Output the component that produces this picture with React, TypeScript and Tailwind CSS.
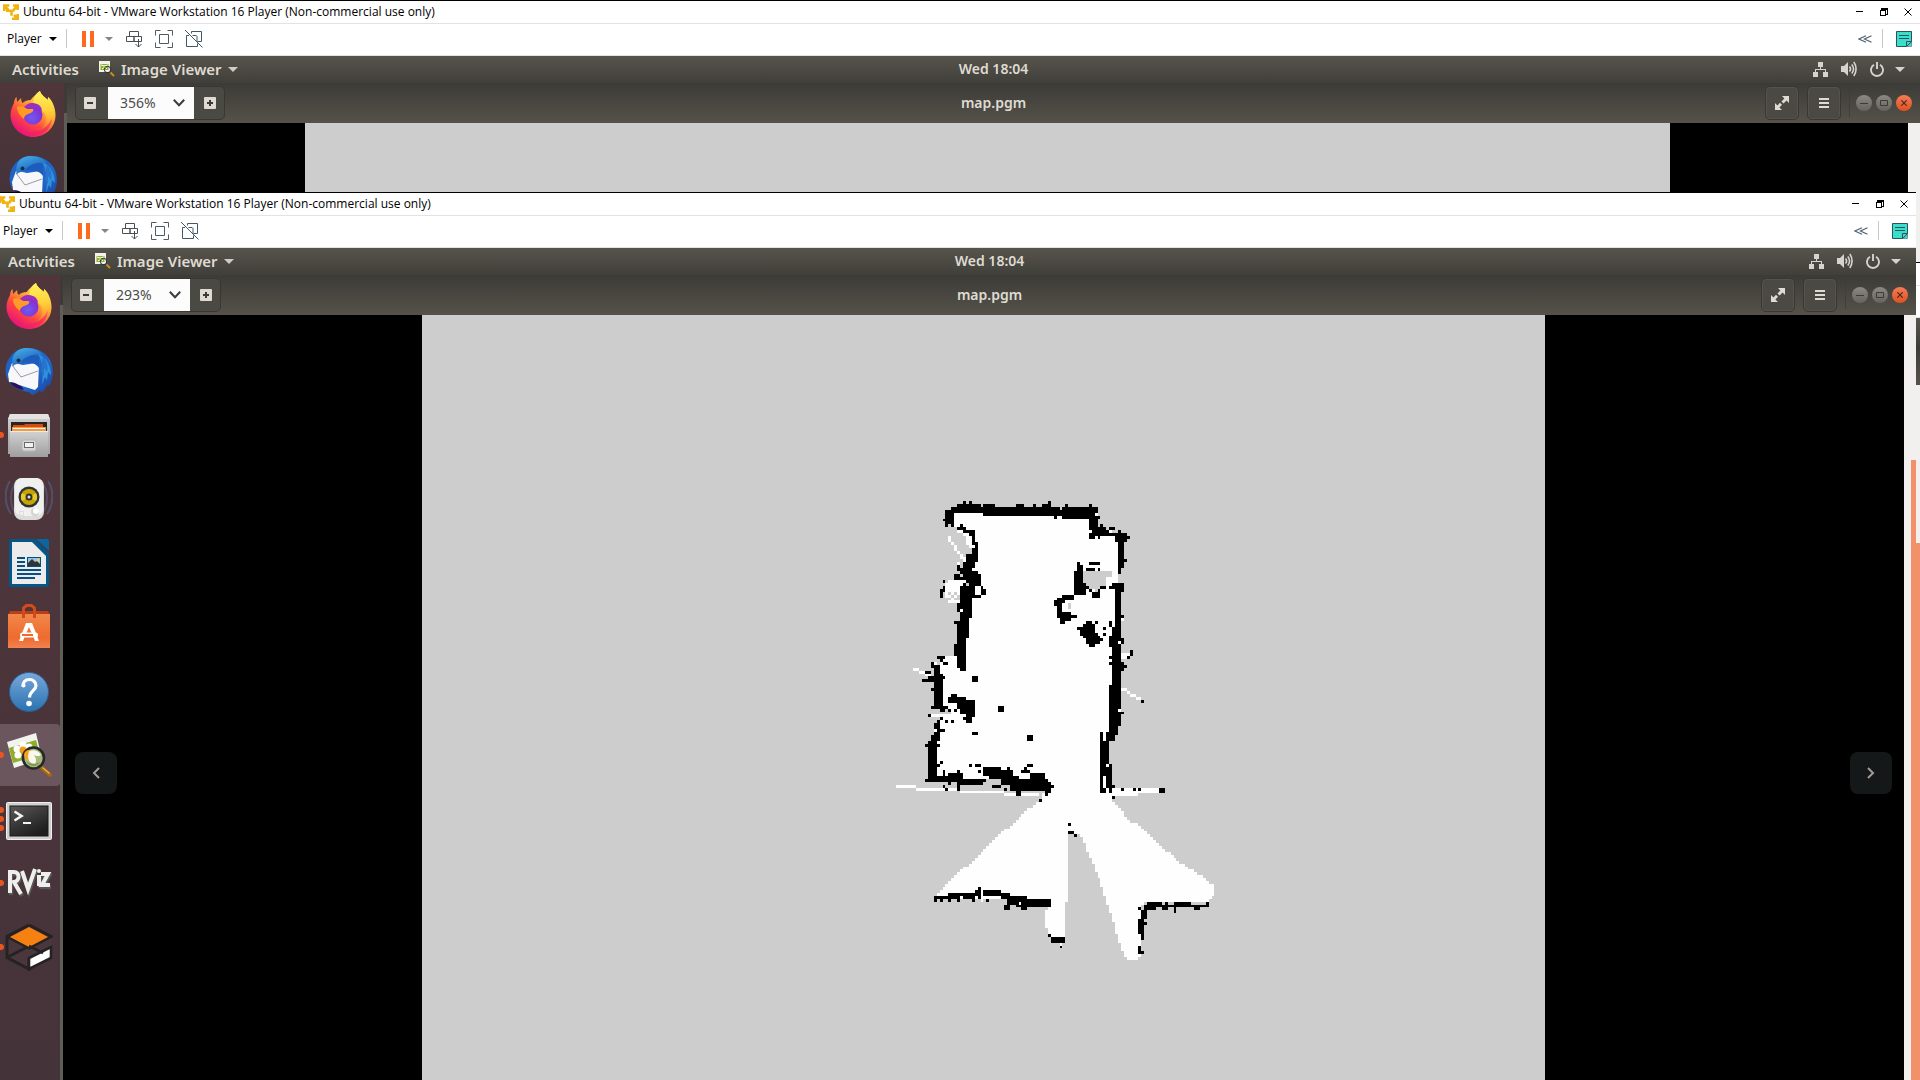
import React from "react";

/* ---------- occupancy map ---------- */

type Layer = { kind: "free" | "wall" | "unknown"; poly?: string; rects?: string };

const CELL = 8.773;
const X0 = -1374;
const Y0 = 1.6;
const COLS = 384;
const ROWS = 262;
const Y_START = -57;

const layers: Layer[] = [
  {
    kind: "free",
    poly: "222,92 640,92 640,165 715,165 722,270 710,310 710,480 700,620 695,740 688,760 688,930 697,960 750,1025 768,1029 850,1105 905,1150 985,1203 1005,1222 1005,1238 987,1262 800,1262 785,1280 785,1425 767,1440 742,1440 725,1410 690,1290 665,1215 640,1155 608,1080 600,1063 565,1063 565,1262 557,1262 557,1375 510,1375 497,1335 497,1300 510,1262 166,1249 166,1243 250,1165 290,1133 350,1073 450,985 485,950 500,930 345,897 180,895 165,890 165,740 190,712 205,705 200,680 175,680 175,545 200,530 230,530 250,400 270,330 275,210 249,170 231,158 231,145 222,141",
  },
  { kind: "unknown", poly: "231,158 249,158 258,185 267,205 258,222 240,213 222,180" },
  {
    kind: "unknown",
    poly: "609,272 688,272 697,285 683,310 665,318 653,333 627,328 618,307 609,305",
  },
  {
    kind: "free",
    poly: "205,300 240,294 258,300 258,325 240,342 235,375 213,370 196,350 198,316",
  },
  {
    kind: "unknown",
    rects:
      "222 333 231 342;213 342 222 350;231 342 240 360;205 350 213 360;205 333 213 342;222 350 231 360;162 692 213 701;320 897 354 912;564 369 573 387",
  },
  {
    kind: "free",
    rects:
      "207 167 213 185;213 185 222 194;222 194 231 210;231 210 240 220;240 220 249 237;249 230 258 245;231 245 240 254;683 290 697 316;697 280 705 290;705 272 713 280;98 562 117 570;117 570 135 579;135 579 153 588;153 701 240 710;722 624 740 633;740 633 749 642;749 642 767 651;767 651 785 660;722 518 749 536;48 912 108 921;108 921 240 930;240 930 372 939;372 939 480 947;697 921 837 939;697 939 777 947;540 1386 549 1395;162 545 171 554",
  },
  {
    kind: "wall",
    rects:
      "231 72 302 96;213 81 231 96;198 90 222 132;198 132 207 140;213 132 222 140;190 114 198 123;249 63 258 72;267 63 276 72;312 72 345 81;302 81 312 96;312 81 522 104;408 72 435 81;460 72 468 81;487 72 513 81;504 63 513 72;522 81 540 104;522 104 531 113;540 90 549 104;549 81 653 113;558 72 566 81;627 72 636 81",
  },
  {
    kind: "wall",
    rects:
      "627 104 653 150;653 104 662 113;636 141 680 167;627 158 645 176;653 167 662 176;662 132 672 141;688 141 705 150;680 150 697 158;680 158 715 167;715 150 722 158;705 158 740 185;740 167 749 176;715 185 731 264;731 237 740 245;713 264 722 280;627 245 662 254;591 245 600 272;600 254 609 272;618 263 645 272;653 263 662 272;582 272 609 342;582 333 618 342;609 307 618 325;609 316 618 333;618 316 627 325;627 325 636 333;636 333 662 342;653 325 662 333;636 342 662 350;662 316 680 325;697 307 705 316;705 310 731 333;688 316 705 325",
  },
  {
    kind: "wall",
    rects:
      "705 333 722 480;722 405 731 422;697 440 722 480;688 422 697 440;688 465 722 500;722 475 731 492;697 500 722 614;688 527 697 536;688 545 697 554;722 545 731 570;731 554 740 562;714 597 722 606;688 614 722 738;722 692 731 701;749 510 758 527;740 527 749 536;785 660 794 669;688 738 714 765;663 757 672 937;672 783 688 890;680 757 705 783;680 880 688 920;688 852 697 937;672 920 680 937;697 912 705 920;723 921 731 929;758 921 767 929;777 921 785 929;837 921 855 938;697 947 705 956",
  },
  {
    kind: "wall",
    rects:
      "549 342 582 360;531 350 558 369;522 360 549 378;531 378 549 412;549 396 574 413;540 405 574 422;540 422 558 430;574 404 591 413;591 440 600 448;609 431 645 448;600 440 645 465;609 457 653 475;618 475 662 492;627 492 645 500;618 422 636 431;645 422 653 431;653 465 662 475;662 475 672 483;672 440 680 448;672 457 680 465",
  },
  {
    kind: "wall",
    rects:
      "240 132 249 141;231 141 258 150;249 150 276 158;267 150 285 167;276 158 285 185;285 185 294 245;276 185 285 194;276 205 294 220;258 220 294 245;249 245 285 263;231 254 240 272;240 263 276 280;249 272 294 290;222 282 240 298;240 290 267 298;258 290 302 307;294 282 302 310;267 298 285 350;240 316 275 350;285 307 302 320;302 316 312 325;302 325 320 342;275 342 302 350;249 307 258 316;240 342 275 390;231 370 275 396;240 387 275 413;231 430 267 475;240 413 267 430;222 422 240 431;231 475 258 492;222 492 258 530;231 530 258 560;240 560 258 570;190 300 198 307;180 325 190 350;190 316 198 333",
  },
  {
    kind: "wall",
    rects:
      "171 527 198 536;180 536 189 545;189 545 207 554;153 545 162 562;162 554 180 600;135 570 153 579;144 588 165 606;126 597 144 606;162 580 189 683;189 588 198 597;153 624 162 633;153 675 162 683;162 675 207 683;180 683 198 690;207 683 213 692;213 642 231 651;205 651 258 660;205 660 285 668;231 668 285 683;240 675 285 701;258 701 285 710;249 710 276 720;258 720 276 729;222 683 231 692;144 701 153 710;180 710 189 718;171 718 180 727;162 727 180 747;171 747 198 756;198 720 207 729;213 720 222 729;276 588 294 606;354 675 372 692",
  },
  {
    kind: "wall",
    rects:
      "162 756 180 765;153 765 180 783;144 783 171 900;135 790 144 797;171 790 180 797;135 897 171 905;180 843 189 852;171 852 180 861;189 870 198 888;171 888 205 905;205 879 231 905;213 879 222 888;231 870 240 879;231 879 249 905;231 905 240 929;240 897 312 918;312 897 320 905;205 905 213 914;189 912 198 920;198 920 207 929;276 756 294 765;444 765 459 783;267 852 276 861;285 852 302 861;294 870 302 879;312 861 363 888;330 888 398 897;345 870 398 888;363 867 390 879;381 861 390 870;354 888 398 900;363 897 500 910;390 905 513 929;336 912 363 920;372 920 381 929;408 920 426 947;495 912 522 921;495 921 513 938;495 929 504 947;426 870 444 880;435 861 444 870;444 852 459 861;444 870 453 879;450 879 495 915;398 888 417 897;477 956 486 965",
  },
  {
    kind: "wall",
    rects:
      "565 1029 573 1035;565 1053 582 1062;582 1062 591 1070;162 1248 240 1257;162 1257 171 1262;207 1239 276 1250;249 1239 285 1257;285 1230 302 1248;294 1221 302 1257;276 1248 285 1262;180 1257 189 1262;205 1257 213 1262;231 1257 240 1262;312 1230 363 1248;336 1239 390 1248;363 1248 443 1257;381 1257 513 1270;443 1257 513 1281;372 1272 390 1290;408 1272 443 1280;426 1280 443 1290;320 1257 328 1262;513 1371 558 1385;504 1362 513 1371;540 1395 549 1404",
  },
  {
    kind: "wall",
    rects:
      "802 1263 846 1281;855 1263 864 1272;846 1270 872 1281;846 1281 864 1290;881 1263 933 1281;872 1272 881 1281;881 1281 890 1298;933 1272 987 1281;978 1263 987 1272;942 1281 960 1290;802 1281 828 1290;777 1281 786 1290;794 1272 802 1290;786 1290 802 1317;777 1317 795 1380;794 1325 802 1335;777 1395 786 1422;786 1413 795 1422",
  },
  {
    kind: "free",
    rects:
      "645 96 653 104;240 387 249 396;722 413 731 422;714 483 722 492;714 683 722 692;672 888 680 920;680 850 688 858;302 1221 312 1262;417 1262 426 1272;189 660 198 668;435 879 444 888;777 1365 786 1380;240 1248 249 1257;689 150 697 155",
  },
];

function inside(x: number, y: number, pts: number[][]) {
  let hit = false;
  for (let i = 0, j = pts.length - 1; i < pts.length; j = i++) {
    const [xi, yi] = pts[i];
    const [xj, yj] = pts[j];
    if (yi > y !== yj > y && x < ((xj - xi) * (y - yi)) / (yj - yi) + xi) hit = !hit;
  }
  return hit;
}

function buildMap() {
  const grid: string[][] = Array.from({ length: ROWS }, () => Array(COLS).fill("unknown"));
  for (const layer of layers) {
    if (layer.poly) {
      const pts = layer.poly.split(" ").map((p) => p.split(",").map(Number));
      for (let r = 0; r < ROWS; r++)
        for (let c = 0; c < COLS; c++)
          if (inside(X0 + (c + 0.5) * CELL, Y0 + (r + Y_START + 0.5) * CELL, pts)) grid[r][c] = layer.kind;
    }
    for (const s of layer.rects ? layer.rects.split(";") : []) {
      const [a, b, c2, d] = s.split(" ").map(Number);
      const ca = Math.round((a - X0) / CELL);
      const ra = Math.round((b - Y0) / CELL) - Y_START;
      const cb = Math.max(ca + 1, Math.round((c2 - X0) / CELL));
      const rb = Math.max(ra + 1, Math.round((d - Y0) / CELL) - Y_START);
      for (let r = ra; r < rb; r++) for (let c = ca; c < cb; c++) grid[r][c] = layer.kind;
    }
  }
  const out = { free: "", wall: "" };
  grid.forEach((row, r) => {
    let c = 0;
    while (c < COLS) {
      let e = c;
      while (e < COLS && row[e] === row[c]) e++;
      const kind = row[c];
      if (kind === "free" || kind === "wall") {
        const xa = Math.round((X0 + c * CELL) / 3);
        const xb = Math.round((X0 + e * CELL) / 3);
        const ya = Math.round((Y0 + (r + Y_START) * CELL) / 3);
        const yb = Math.round((Y0 + (r + Y_START + 1) * CELL) / 3);
        out[kind] += `M${xa} ${ya}H${xb}V${yb}H${xa}Z`;
      }
      c = e;
    }
  });
  return out;
}

const map = buildMap();

const MapDrawing = () => (
  <svg viewBox="0 0 1123 765" className="block w-full" shapeRendering="crispEdges" role="img" aria-label="map.pgm">
    <g transform="translate(458 165)">
      <path d={map.free} fill="#fefefe" />
      <path d={map.wall} fill="#000" />
    </g>
  </svg>
);

/* ---------- launcher icons ---------- */

const Svg = ({ children }: { children: React.ReactNode }) => (
  <svg viewBox="0 0 48 48" className="size-12 shrink-0" aria-hidden="true">
    {children}
  </svg>
);

const Firefox = () => (
  <Svg>
    <defs>
      <linearGradient id="ffa" x1="0.85" y1="0.1" x2="0.25" y2="0.95">
        <stop offset="0" stopColor="#fff44f" />
        <stop offset="0.35" stopColor="#ffa930" />
        <stop offset="0.65" stopColor="#ff4a3f" />
        <stop offset="1" stopColor="#e8107c" />
      </linearGradient>
      <radialGradient id="ffb" cx="0.45" cy="0.65" r="0.6">
        <stop offset="0" stopColor="#6a5cf0" />
        <stop offset="1" stopColor="#8a2ad0" />
      </radialGradient>
      <linearGradient id="ffc" x1="0.5" y1="0" x2="0.6" y2="1">
        <stop offset="0" stopColor="#fff25a" />
        <stop offset="0.5" stopColor="#ffd23c" />
        <stop offset="1" stopColor="#ff9a2e" stopOpacity="0.2" />
      </linearGradient>
    </defs>
    <g transform="translate(0 -1)">
      <path d="M31 1c1 4 5 6 8 9c-.3-2 0-3 .5-3c4 4 7 11 7 18C46.500 38 36 47 24 47S1.500 37 1.500 25c0-5 2-9 3.500-12c0-2 1-5 2.500-6l.6 5l4-4c0 2 .4 4 1.500 5c2-2 5-3 8-3C24 7 28 3 31 1Z" fill="url(#ffa)" />
      <path d="M31 1c1 4 5 6 8 9c5 6 7 14 4 22c-3 6-8 9-13 9c5-3 8-8 7-14c-1-7-8-8-12-12C23 10 26 4 31 1Z" fill="url(#ffc)" />
      <circle cx="24" cy="25" r="9.500" fill="url(#ffb)" />
      <path d="M14 19c3-6 9-7 14-5c3 1 5 4 5 7c-3-3-6-4-9-3Z" fill="#9a2fc4" />
      <path d="M8 17c4-2 8 0 10 2h6c1 2-1 4-5 5c-3 1-4 3-4 5c-3-2-7-7-7-12Z" fill="#ff9b24" />
      <path d="M3 29c4 11 14 15 25 12c8-2 13-7 15-13c-1 11-9 18-19 18S5 39 3 29Z" fill="#ef1e6c" opacity="0.65" />
    </g>
  </Svg>
);

const Thunderbird = () => (
  <Svg>
    <defs>
      <linearGradient id="tba" x1="0" y1="0" x2="1" y2="1">
        <stop offset="0" stopColor="#1d5fc0" />
        <stop offset="0.6" stopColor="#2268c9" />
        <stop offset="1" stopColor="#1b3f9c" />
      </linearGradient>
      <linearGradient id="tbb" x1="0" y1="0" x2="0.6" y2="1">
        <stop offset="0" stopColor="#49b4ea" />
        <stop offset="1" stopColor="#1756b5" />
      </linearGradient>
    </defs>
    <path d="M15 2C27-1 39 3 45 13c4 8 4 18-1 26l-2-1c-1 3-3 6-6 8l-1-3c-3 3-5 4-8 5l-3-3C14 44 3 38 1 28C-1 17 5 6 15 2Z" fill="url(#tba)" />
    <path d="M3 31c2 7 8 11 16 12l-4-6Z" fill="#2a1060" />
    <path d="M4 33l2-13l3-4l9 2l13-2l3 2l-1 22l-3 3L14 38Z" fill="#f8f8fb" />
    <path d="M3 27l4-11l7 2v18L4 35Z" fill="#f8f8fb" />
    <path d="M7 18l9 12l17-6" fill="none" stroke="#9b9ba5" strokeWidth="1" />
    <path d="M8 20C5 8 12 1 22 1c8 0 13 3 16 7C28 6 20 10 16 15c-3 3-7 1-8 5Z" fill="url(#tbb)" />
    <path d="M16 15c5-6 13-8 18-6v12c-4-6-11-6-18-6Z" fill="#1c5cbc" />
    <path d="M33 7c10 4 13 14 13 21l-3-3l-1 8l-2-3l-3 8c1-9 2-22-4-31Z" fill="#2b92db" />
    <path d="M38 10c5 5 5 11 4 15l-3-4v8l-3-4c2-6 0-11 2-15Z" fill="#2a73cc" />
    <circle cx="13.500" cy="13.500" r="2" fill="#12304e" />
  </Svg>
);

const Files = () => (
  <Svg>
    <defs>
      <linearGradient id="fla" x1="0" y1="0" x2="0" y2="1">
        <stop offset="0" stopColor="#d2d2d2" />
        <stop offset="1" stopColor="#9e9e9e" />
      </linearGradient>
    </defs>
    <path d="M5 3h38l2 5v35h-2v3H5v-3H3V8Z" fill="url(#fla)" />
    <path d="M5 3h38l2 5H3Z" fill="#e2e2e2" />
    <path d="M6 11h36v11H6Z" fill="#2b2420" />
    <path d="M8 14h11l1-1h18v3H8Z" fill="#cf4d17" />
    <path d="M7 16h34v5H7Z" fill="#f59a3e" />
    <path d="M8 17h32v1H8Z" fill="#fff4e0" />
    <path d="M5 20h38v26H5Z" fill="url(#fla)" />
    <path d="M5 20h38v1H5Z" fill="#ececec" />
    <rect x="17" y="29" width="14" height="11" rx="2" fill="#d8d8d8" stroke="#b4b4b4" />
    <rect x="19.500" y="31.500" width="9" height="5" fill="#f2f2f2" stroke="#6a6a6a" />
  </Svg>
);

const Rhythmbox = () => (
  <Svg>
    <g fill="none" stroke="#5d7bb2" strokeWidth="2" opacity="0.4">
      <path d="M5 6C-1 15-1 29 6 39M9 10c-4 8-4 18 0 26M43 6c6 9 6 23-1 33M39 10c4 8 4 18 0 26" />
    </g>
    <rect x="9" y="3" width="30" height="42" rx="8" fill="#dcdcda" />
    <rect x="10" y="3" width="28" height="38" rx="7" fill="#f0f0ee" />
    <circle cx="24" cy="22" r="10.500" fill="#2e3436" />
    <circle cx="24" cy="22" r="8" fill="#c8a400" />
    <path d="M24 22l-7-4a8 8 0 0 0 0 8ZM24 22l7-4a8 8 0 0 1 0 8Z" fill="#e7ca28" />
    <circle cx="24" cy="22" r="3.500" fill="#333" />
    <circle cx="24" cy="22" r="1.500" fill="#ddd" />
    <circle cx="30" cy="37" r="4" fill="#d2d2d0" />
    <circle cx="31" cy="36" r="3" fill="#fff" />
    <rect x="14.500" y="36.500" width="4" height="4" fill="none" stroke="#ddd" />
  </Svg>
);

const Writer = () => (
  <Svg>
    <path d="M7 0h23l14 14v31a3 3 0 0 1-3 3H7a3 3 0 0 1-3-3V3a3 3 0 0 1 3-3Z" fill="#065688" />
    <path d="M31 0h11a2 2 0 0 1 2 2v10Z" fill="#0a66a0" />
    <path d="M7 3h20l14 14v28H7Z" fill="#ececec" />
    <path d="M12 18h8v2h-8ZM12 22h8v2h-8ZM12 26h8v2h-8ZM12 30h24v2H12ZM12 34h24v2H12ZM12 38h18v2H12Z" fill="#08507f" />
    <rect x="22.500" y="18.500" width="13" height="9" fill="#8fc6ea" stroke="#08507f" />
    <path d="M23 27v-3l4-4l3 3l2-1l3 3v2Z" fill="#333" />
    <circle cx="33" cy="21" r="1.500" fill="#f5d33c" />
  </Svg>
);

const Software = () => (
  <Svg>
    <defs>
      <linearGradient id="swa" x1="0" y1="0" x2="0" y2="1">
        <stop offset="0" stopColor="#f0884a" />
        <stop offset="0.7" stopColor="#ef6a2e" />
        <stop offset="1" stopColor="#f28350" />
      </linearGradient>
    </defs>
    <path d="M5 8h38l2 4H3Z" fill="#b5401a" />
    <path d="M3 11h42v34H3Z" fill="url(#swa)" />
    <path d="M18.500 15V5l3-2.500h5l3 2.500v10" fill="none" stroke="#d24a1c" strokeWidth="3" />
    <path d="M21 20h6l7 18h-4l-1.500-4h-9L18 38h-4ZM24 24l-3 7h6Z" fill="#fff" fillRule="evenodd" />
    <rect x="15" y="29.500" width="18" height="5" rx="2.500" fill="#fff" />
    <rect x="17" y="31" width="11" height="2" fill="#ef6a2e" />
  </Svg>
);

const Help = () => (
  <Svg>
    <defs>
      <linearGradient id="hpa" x1="0" y1="0" x2="0" y2="1">
        <stop offset="0" stopColor="#78a8dc" />
        <stop offset="1" stopColor="#2a72b0" />
      </linearGradient>
    </defs>
    <circle cx="24" cy="25" r="19.500" fill="url(#hpa)" stroke="#2c5f96" />
    <path d="M18 19.500c0-5 3-7 6.500-7s6.500 2.500 6.500 6c0 5-6.500 5.500-6.500 12" fill="none" stroke="#fff" strokeWidth="3.200" />
    <circle cx="18.500" cy="18.500" r="2" fill="#fff" />
    <circle cx="24" cy="36.500" r="2.800" fill="#fff" />
  </Svg>
);

const Viewer = () => (
  <Svg>
    <path d="M2 11L31 2l6 26L9 37Z" fill="#f2f2ee" />
    <path d="M4 17l27-8l4 15l-27 8Z" fill="#8fae2d" />
    <g fill="#fff">
      <circle cx="12" cy="18" r="3.500" />
      <circle cx="18" cy="14" r="3.500" />
      <circle cx="13" cy="24" r="3.500" />
      <circle cx="24" cy="16" r="3.500" />
    </g>
    <circle cx="18" cy="19" r="3.500" fill="#f29b1d" />
    <path d="M37 37l8 7" stroke="#a3670f" strokeWidth="4" strokeLinecap="round" />
    <path d="M37.500 36.500l7 6" stroke="#e8b04a" strokeWidth="1.500" />
    <circle cx="28.500" cy="27" r="10.500" fill="#a9b97a" stroke="#26282a" strokeWidth="2.600" />
    <circle cx="24" cy="24" r="5" fill="#f8a21c" />
    <path d="M24 20c5-2 10 0 12 4c-3 2-5 1-7 0c2 3 3 6 1 9c-5 0-7-4-7-8Z" fill="#fff" opacity="0.9" />
    <path d="M21 30c3 3 9 4 14 1c-3 5-10 6-14-1Z" fill="#7c9a4a" />
  </Svg>
);

const TerminalIcon = () => (
  <Svg>
    <defs>
      <linearGradient id="tma" x1="0" y1="0" x2="0.6" y2="1">
        <stop offset="0" stopColor="#5a5a5a" />
        <stop offset="0.5" stopColor="#3a3a3a" />
        <stop offset="1" stopColor="#1e1e1e" />
      </linearGradient>
    </defs>
    <g transform="translate(0 3)">
      <rect x="1.500" y="4.500" width="45" height="37" rx="1" fill="#cfcfcf" stroke="#efefef" />
      <rect x="5" y="8" width="38" height="30" fill="url(#tma)" stroke="#1a1a1a" />
      <path d="M9.500 13.500l7 4.500l-7 4.500" fill="none" stroke="#f4f4f4" strokeWidth="2.600" />
      <path d="M18 25h8" stroke="#f4f4f4" strokeWidth="2" />
    </g>
  </Svg>
);

const RViz = () => (
  <Svg>
    <g transform="translate(1 2)" fill="none" stroke="#5a5557" strokeWidth="4.400">
      <path d="M5 34V13h4c6 0 6 9 0 10l7 12M17 12l6 18l7-20M34 16v11M36 15h7l-6 11h8" />
    </g>
    <g fill="none" stroke="#eeeeec" strokeWidth="4">
      <path d="M5 34V13h4c6 0 6 9 0 10l7 12M17 12l6 18l7-20M34 16v11M36 15h7l-6 11h8" />
    </g>
    <circle cx="34" cy="12" r="2" fill="#eeeeec" />
  </Svg>
);

const Gazebo = () => (
  <Svg>
    <path d="M24 1l23 12v21L24 47L1 34V13Z" fill="#4a373d" />
    <path d="M24 2L2 13.500v21L24 46V36M24 2l22 11.500L24 25L2 13.500M2 34.500L24 23" fill="none" stroke="#262223" strokeWidth="3" />
    <path d="M24 4l19 10l-19 10L5 14Z" fill="#f58113" />
    <path d="M24 35l22-11v11L24 46Z" fill="#fff" stroke="#262223" strokeWidth="2.600" />
    <path d="M24 23l14 7" stroke="#262223" strokeWidth="2.600" />
  </Svg>
);

const apps = [
  { name: "Firefox", Icon: Firefox, dots: 0 },
  { name: "Thunderbird Mail", Icon: Thunderbird, dots: 0 },
  { name: "Files", Icon: Files, dots: 1 },
  { name: "Rhythmbox", Icon: Rhythmbox, dots: 0 },
  { name: "LibreOffice Writer", Icon: Writer, dots: 0 },
  { name: "Ubuntu Software", Icon: Software, dots: 0 },
  { name: "Help", Icon: Help, dots: 0 },
  { name: "Image Viewer", Icon: Viewer, dots: 1, active: true },
  { name: "Terminal", Icon: TerminalIcon, dots: 3 },
  { name: "RViz", Icon: RViz, dots: 1 },
  { name: "Gazebo", Icon: Gazebo, dots: 1 },
];

const Dock = () => (
  <div className="flex h-full shrink-0">
    <nav aria-label="Dock" className="flex w-16 flex-col gap-0.5 bg-linear-to-b from-[#50363b] to-[#45333a] pt-px pl-1">
      {apps.map(({ name, Icon, dots, active }) => (
        <button
          key={name}
          aria-label={name}
          className={`relative flex h-[62px] shrink-0 items-center rounded-r-sm pl-[5px] ${active ? "bg-[#6a565c]" : ""}`}
        >
          <span className="absolute -left-0.5 flex flex-col gap-[3px]">
            {Array.from({ length: dots }, (_, i) => (
              <i key={i} className="size-1.5 rounded-full bg-[#e95420]" />
            ))}
          </span>
          <Icon />
        </button>
      ))}
    </nav>
    <div className="w-[3px] bg-[#5e5d56]">
      <div className="h-[30px] bg-[#3d3a37]" />
    </div>
  </div>
);

/* ---------- VMware chrome ---------- */

const TitleBar = () => (
  <div className="flex h-[23px] items-center border-t border-black bg-white pr-2 pl-[3px]">
    <svg viewBox="0 0 16 16" className="size-4" fill="none" stroke="#f0b310" strokeWidth="2.600" aria-hidden="true">
      <path d="M1.300 7V1.500h5M10 1.500h4.700V6M14.700 10v4.700H9M1.500 2l4 4M14.500 2l-4 4M3 6.800h5.500v5M11.500 6.500H9.500M14.500 14.500l-3.500-3.500" />
    </svg>
    <span className="ml-1 text-[12px] leading-4 whitespace-nowrap text-black">
      Ubuntu 64-bit - VMware Workstation 16 Player (Non-commercial use only)
    </span>
    <div className="ml-auto flex items-center gap-4">
      <button aria-label="Minimize">
        <svg viewBox="0 0 8 8" className="size-2" shapeRendering="crispEdges">
          <path d="M0 3h7v1H0Z" />
        </svg>
      </button>
      <button aria-label="Restore">
        <svg viewBox="0 0 8 8" className="size-2" shapeRendering="crispEdges">
          <path d="M0 2h6v6H0ZM1 3v4h4V3ZM1 0h7v7H6V6h1V2H1Z" fillRule="evenodd" />
        </svg>
      </button>
      <button aria-label="Close">
        <svg viewBox="0 0 8 8" className="size-2" fill="none" stroke="#000">
          <path d="M0.500 0.500l7 7M7.500 0.500l-7 7" />
        </svg>
      </button>
    </div>
  </div>
);

const Toolbar = () => (
  <div className="flex h-[33px] items-center border-y border-[#e3e3e3] bg-white pr-2 pb-0.5 pl-[7px]">
    <button className="flex w-[50px] items-center justify-between text-[12px] leading-4 text-black">
      Player
      <svg viewBox="0 0 8 4" className="h-1 w-2">
        <path d="M0 0h8L4 4Z" />
      </svg>
    </button>
    <div className="ml-[9px] h-[19px] w-px bg-[#c8c8c8]" />
    <button aria-label="Suspend" className="ml-[15px]">
      <svg viewBox="0 0 12 16" className="h-4 w-3" fill="#ff6a1f">
        <path d="M0 0h4v16H0ZM8 0h4v16H8Z" />
      </svg>
    </button>
    <button aria-label="Power options" className="ml-[11px]">
      <svg viewBox="0 0 8 4" className="h-1 w-2" fill="#858585">
        <path d="M0 0h8L4 4Z" />
      </svg>
    </button>
    <button aria-label="Send Ctrl+Alt+Del" className="ml-[13px]">
      <svg viewBox="0 0 17 18" className="h-[18px] w-[17px]" fill="none" stroke="#4b4f53">
        <path d="M3.500 6.500v-5h9v5M.5 6.500h7.500v5H.5ZM8 11.500v-5h7.500v5ZM12.500 9v8M9.500 14l3 3l3-3" />
      </svg>
    </button>
    <button aria-label="Full screen" className="ml-3">
      <svg viewBox="0 0 18 18" className="size-[18px]" fill="none" stroke="#4b5a63">
        <path d="M.5 5.500v-5h5M12.500 .5h5v5M17.500 12.500v5h-5M5.500 17.500h-5v-5M4.500 4.500h9v9h-9Z" />
      </svg>
    </button>
    <button aria-label="Unity" className="ml-3">
      <svg viewBox="0 0 18 18" className="size-[18px]" fill="none" stroke="#435866">
        <path d="M6.500 1.500h10v10h-4M6.500 1.500v2M4 5.500H1.500v11h11v-3M12 6v6M7.500 5.500h4M0 0l17.500 17.500" />
      </svg>
    </button>
    <button aria-label="Collapse toolbar" className="ml-auto">
      <svg viewBox="0 0 14 8" className="h-2 w-3.5" fill="none" stroke="#4c6070" strokeWidth="1.200">
        <path d="M8 .8L.8 4L8 7.200M13.500 .8L6.500 4l7 3.200" />
      </svg>
    </button>
    <div className="ml-2.5 h-[19px] w-px bg-[#c8c8c8]" />
    <button aria-label="Notes" className="ml-[13px]">
      <svg viewBox="0 0 16 16" className="size-4">
        <path d="M.5 .5h15v10l-5 5H.5Z" fill="#36e0cb" stroke="#334f5e" />
        <path d="M10.500 15.500v-5h5M3 4.500h10M3 7.500h10" fill="none" stroke="#334f5e" />
        <path d="M15.500 11v4.500H11Z" fill="#36e0cb" stroke="#334f5e" strokeWidth="0.500" />
      </svg>
    </button>
  </div>
);

/* ---------- guest desktop ---------- */

const TopBar = () => (
  <div className="grid h-[27px] grid-cols-[67px_1fr_auto_1fr] items-center bg-linear-to-b from-[#57544c] to-[#403f3a] pb-px font-['Noto_Sans',sans-serif] text-[14px] leading-5 font-semibold text-[#dfdbd2]">
    <div className="col-span-2 flex items-center pl-3 text-[15px]">
      <button>Activities</button>
      <button className="ml-5 flex items-center">
        <svg viewBox="0 0 16 16" className="size-4">
          <path d="M0 0h11v11H0Z" fill="#f2f2ee" />
          <path d="M1.500 3h8v6h-8Z" fill="#8fae2d" />
          <path d="M2 4l3 1l4-1M3 8l3-2l2 2" stroke="#fff" fill="none" />
          <circle cx="8.500" cy="8.500" r="3.200" fill="none" stroke="#26313a" />
          <path d="M11.500 11.500l3.500 3.500" stroke="#d08a1c" strokeWidth="2" />
        </svg>
        <span className="ml-1.5">Image Viewer</span>
        <svg viewBox="0 0 10 5" className="ml-1.5 h-[5px] w-2.5" fill="#cfccc5">
          <path d="M0 0h10L5 5Z" />
        </svg>
      </button>
    </div>
    <button>Wed 18:04</button>
    <button aria-label="System menu" className="flex items-center justify-end pr-[15px]">
      <svg viewBox="0 0 15 15" className="size-[15px]" fill="#d5d3ce">
        <path d="M5 0h5v5H8v2h5v3h2v5h-5v-5h2V8H3v2h2v5H0v-5h2V7h5V5H5Z" />
      </svg>
      <svg viewBox="0 0 16 16" className="ml-[13px] size-4" fill="none" stroke="#d5d3ce" strokeWidth="1.600">
        <path d="M0 5h3l4-4v14l-4-4H0Z" fill="#d5d3ce" stroke="none" />
        <path d="M8.500 5.500c1.300 1.500 1.300 3.500 0 5M10.800 3.500c2.200 2.800 2.200 6.200 0 9M12.800 1c3 4 3 10 0 14" />
      </svg>
      <svg viewBox="0 0 14 15" className="ml-[13px] h-[15px] w-3.5" fill="none" stroke="#d5d3ce" strokeWidth="1.900">
        <path d="M4 2.800a6 6 0 1 0 6 0M7 0v7" />
      </svg>
      <svg viewBox="0 0 10 5" className="ml-[11px] h-[5px] w-2.5" fill="#d5d3ce">
        <path d="M0 0h10L5 5Z" />
      </svg>
    </button>
  </div>
);

const SmallBox = ({ plus }: { plus?: boolean }) => (
  <svg viewBox="0 0 12 12" className="size-3">
    <rect width="12" height="12" rx="1" fill="#dfdbd2" />
    <path d={plus ? "M3 5h2V3h2v2h2v2H7v2H5V7H3Z" : "M3 5h6v2H3Z"} fill="#3c3b37" />
  </svg>
);

const squareButton = "flex size-[34px] items-center justify-center rounded-[5px] border border-[#383733] bg-[#4b4944] shadow-[inset_0_0_0_1px_#56534c]";
const roundButton = "flex size-4 items-center justify-center rounded-full";

const HeaderBar = ({ zoom }: { zoom: string }) => (
  <header className="grid h-10 grid-cols-[1fr_auto_1fr] items-center bg-linear-to-b from-[#3c3b37] to-[#56524a] px-2 font-['Noto_Sans',sans-serif] text-[14px] leading-5">
    <div className="flex h-[34px] w-[150px] overflow-hidden rounded-[5px] border border-[#383733] bg-[#4b4944]">
      <button aria-label="Zoom out" className="flex flex-1 items-center justify-center pr-1">
        <SmallBox />
      </button>
      <div className="relative w-[86px] bg-[#fcfcfc]">
        <select aria-label="Zoom" defaultValue={zoom} className="size-full appearance-none pl-3 text-[#4c4c4c] outline-none">
          <option>{zoom}</option>
        </select>
        <svg viewBox="0 0 12 8" className="pointer-events-none absolute top-3 right-[9px] h-2 w-3" fill="none" stroke="#3c3c3c" strokeWidth="2">
          <path d="M.8 .8L6 6.300L11.200 .8" />
        </svg>
      </div>
      <button aria-label="Zoom in" className="flex flex-1 items-center justify-center pl-0.5">
        <SmallBox plus />
      </button>
    </div>
    <h1 className="font-semibold text-[#dfdbd2]">map.pgm</h1>
    <div className="flex items-center justify-end">
      <button aria-label="Fullscreen" className={squareButton}>
        <svg viewBox="0 0 14 14" className="size-3.5" fill="#dfdbd2">
          <path d="M7 0h7v7l-2.400-2.400L8.500 7.500L6.500 5.500l2.900-3.100ZM7 14H0V7l2.400 2.400l2.600-2.600l2 2l-2.600 2.800Z" />
        </svg>
      </button>
      <button aria-label="Menu" className={`ml-2 ${squareButton}`}>
        <svg viewBox="0 0 10 10" className="size-2.5" fill="#dfdbd2">
          <path d="M0 0h10v2H0ZM0 4h10v2H0ZM0 8h10v2H0Z" />
        </svg>
      </button>
      <div className="ml-2 h-7 w-px bg-[#3f3e3a]" />
      <div className="ml-1.5 flex gap-1">
        <button aria-label="Minimize window" className={`bg-linear-to-b from-[#8b8983] to-[#65635d] ${roundButton}`}>
          <svg viewBox="0 0 8 8" className="size-2" stroke="#3c3b37">
            <path d="M0 4.500h8" />
          </svg>
        </button>
        <button aria-label="Maximize window" className={`bg-linear-to-b from-[#8b8983] to-[#65635d] ${roundButton}`}>
          <svg viewBox="0 0 8 6" className="h-1.5 w-2" fill="none" stroke="#3c3b37">
            <path d="M.5 .5h7v5h-7Z" />
          </svg>
        </button>
        <button aria-label="Close window" className={`bg-linear-to-b from-[#f47b55] to-[#e0501d] ${roundButton}`}>
          <svg viewBox="0 0 6 6" className="size-1.5" stroke="#4a2a18" strokeWidth="1.200">
            <path d="M.3 .3l5.400 5.400M5.700 .3L.3 5.700" />
          </svg>
        </button>
      </div>
    </div>
  </header>
);

const NavButton = ({ next }: { next?: boolean }) => (
  <button
    aria-label={next ? "Next image" : "Previous image"}
    className={`absolute top-[437px] flex size-[42px] items-center justify-center rounded-lg bg-[#151818] ${next ? "right-3" : "left-3"}`}
  >
    <svg viewBox="0 0 8 12" className="h-3 w-2" fill="none" stroke="#a09c94" strokeWidth="2">
      <path d={next ? "M1 1l5 5l-5 5" : "M7 1L2 6l5 5"} />
    </svg>
  </button>
);

type WindowProps = { zoom: string; pageClass: string; trackStart?: boolean; children?: React.ReactNode; nav?: boolean };

const VmWindow = ({ zoom, pageClass, trackStart, children, nav }: WindowProps) => (
  <section className="flex h-full flex-col">
    <TitleBar />
    <Toolbar />
    <TopBar />
    <div className="flex min-h-0 flex-1">
      <Dock />
      <div className="flex min-w-0 flex-1 flex-col">
        <HeaderBar zoom={zoom} />
        <div className="flex min-h-0 flex-1">
          <main className="relative flex min-w-0 flex-1 justify-center overflow-hidden bg-black">
            <div className={`bg-[#cdcdcd] ${pageClass}`}>{children}</div>
            {nav && (
              <>
                <NavButton />
                <NavButton next />
              </>
            )}
          </main>
          <div className="flex w-3 justify-end bg-[#f1f0ef]">
            {trackStart && <div className="mt-[145px] w-[5px] bg-[#f29169]" />}
          </div>
        </div>
      </div>
    </div>
  </section>
);

export default function App() {
  return (
    <div className="flex h-screen flex-col overflow-hidden bg-black font-['Open_Sans',sans-serif]">
      <div className="h-48 shrink-0 overflow-hidden">
        <VmWindow zoom="356%" pageClass="w-[1365px]" />
      </div>
      <div className="flex min-h-0 flex-1">
        <div className="min-w-0 flex-1 overflow-hidden">
          <div className="-ml-1 h-full">
            <VmWindow zoom="293%" pageClass="w-[1123px]" trackStart nav>
              <MapDrawing />
            </VmWindow>
          </div>
        </div>
        <div className="flex w-1 flex-col bg-[#f1f0ef]">
          <div className="h-[70px]" />
          <div className="h-[23px] border-t border-black bg-white" />
          <div className="h-[33px] border-y border-[#e3e3e3] bg-white" />
          <div className="h-[27px] bg-linear-to-b from-[#57544c] to-[#403f3a]" />
          <div className="h-10 bg-linear-to-b from-[#3c3b37] to-[#56524a]" />
          <div className="h-[158px]" />
          <div className="flex-1 bg-[#f29169]" />
        </div>
      </div>
    </div>
  );
}
